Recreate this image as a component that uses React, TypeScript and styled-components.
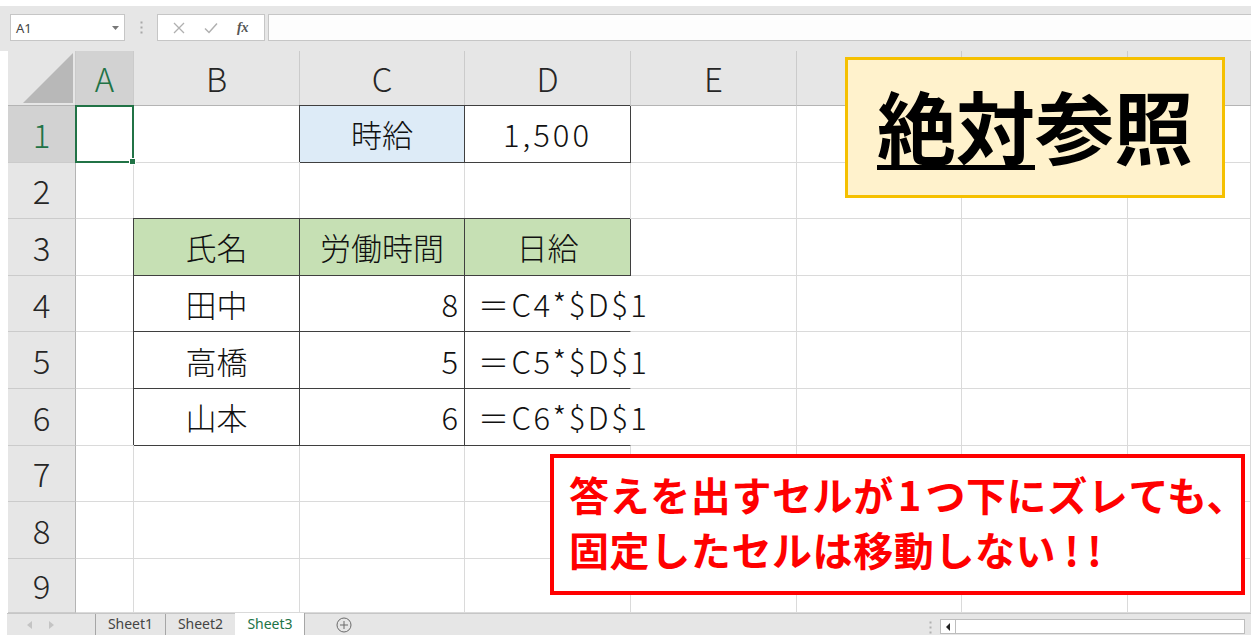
import React from 'react';
import styled, { createGlobalStyle } from 'styled-components';

const jp = `"Noto Sans CJK JP", "Noto Sans", sans-serif`;
const ui = `"Noto Sans", "Noto Sans CJK JP", sans-serif`;

const colors = {
  chrome: '#e6e6e6',
  chromeLine: '#c6c6c6',
  headActive: '#d2d2d2',
  grid: '#dadada',
  dark: '#3f3f3f',
  excelGreen: '#217346',
  blue: '#ddebf7',
  green: '#c6e0b4',
  gold: '#f5c000',
  cream: '#fff2cc',
  red: '#ff0000'
};

const GlobalStyle = createGlobalStyle`
  html, body {
    margin: 0;
    padding: 0;
    background: #ffffff;
    font-family: ${jp};
  }
  * {
    box-sizing: border-box;
  }
`;

const Frame = styled.div`
  width: 1251px;
  height: 643px;
  display: flex;
  flex-direction: column;
  overflow: hidden;
  background: #ffffff;
`;

// 数式バー
const TopBar = styled.div`
  height: 45px;
  margin-top: 6px;
  background: ${colors.chrome};
  display: flex;
  align-items: flex-start;
  padding: 8px 0 0 10px;
`;

const NameBox = styled.div`
  width: 115px;
  height: 27px;
  background: #ffffff;
  border: 1px solid ${colors.chromeLine};
  display: flex;
  align-items: center;
  justify-content: space-between;
  padding: 0 5px 0 5px;
  font-family: ${ui};
  font-size: 13px;
  color: #444444;
`;

const Grip = styled.div<{ $width: number }>`
  width: ${(p) => p.$width}px;
  height: 27px;
  display: flex;
  align-items: center;
  justify-content: center;
`;

const FxBox = styled.div`
  width: 108px;
  height: 27px;
  background: #ffffff;
  border: 1px solid ${colors.chromeLine};
  display: flex;
  align-items: center;
  justify-content: space-around;
  padding: 0 6px;
`;

const FxLabel = styled.span`
  font-family: "Liberation Serif", serif;
  font-style: italic;
  font-weight: 700;
  font-size: 14px;
  color: #555555;
`;

const FormulaInput = styled.div`
  flex: 1;
  height: 27px;
  margin-left: 3px;
  background: #fdfdfd;
  border: 1px solid ${colors.chromeLine};
  border-right: none;
`;

// シート
const SheetArea = styled.div`
  position: relative;
  height: 562px;
  margin-left: 8px;
`;

const Grid = styled.div`
  display: grid;
  grid-template-columns: 68px 58px 166px 165px 166px 166px 165px 166px 1fr;
  grid-template-rows: 55px repeat(8, 56.6px) 1fr;
  height: 100%;
`;

const Head = styled.div<{ $active?: boolean; $row?: boolean }>`
  position: relative;
  background: ${(p) => (p.$active ? colors.headActive : colors.chrome)};
  border-right: 1px solid ${(p) => (p.$row ? '#b4b4b4' : '#cbcbcb')};
  border-bottom: 1px solid ${(p) => (p.$row ? '#cbcbcb' : '#b4b4b4')};
  display: flex;
  align-items: center;
  justify-content: center;
  font-family: ${jp};
  font-weight: 300;
  font-size: 33px;
  color: ${(p) => (p.$active ? colors.excelGreen : '#262626')};
  overflow: hidden;
`;

const CornerMark = styled.svg`
  position: absolute;
  right: 2px;
  bottom: 2px;
`;

type Align = 'left' | 'center' | 'right';

const Cell = styled.div<{
  $bg?: string;
  $align?: Align;
  $box?: boolean;
  $openRight?: boolean;
  $spacing?: number;
  $selected?: boolean;
}>`
  position: relative;
  min-width: 0;
  background: ${(p) => p.$bg || 'transparent'};
  border-right: 1px solid
    ${(p) => (p.$openRight ? 'transparent' : p.$box ? colors.dark : colors.grid)};
  border-bottom: 1px solid ${(p) => (p.$box ? colors.dark : colors.grid)};
  box-shadow: ${(p) => (p.$box ? `-1px -1px 0 0 ${colors.dark}` : 'none')};
  display: flex;
  align-items: center;
  justify-content: ${(p) =>
    p.$align === 'right' ? 'flex-end' : p.$align === 'left' ? 'flex-start' : 'center'};
  padding: ${(p) => (p.$align === 'right' ? '0 6px 0 0' : p.$align === 'left' ? '0 0 0 13px' : '0')};
  white-space: nowrap;
  font-family: ${jp};
  font-weight: 300;
  font-size: 31px;
  letter-spacing: ${(p) => p.$spacing || 0}px;
  color: #111111;

  ${(p) =>
    p.$selected &&
    `
    &::after {
      content: '';
      position: absolute;
      left: -1px;
      top: -1px;
      right: -1px;
      bottom: -1px;
      border: 2px solid ${colors.excelGreen};
    }
    &::before {
      content: '';
      position: absolute;
      right: -3px;
      bottom: -3px;
      width: 5px;
      height: 5px;
      background: ${colors.excelGreen};
      border: 1px solid #ffffff;
      z-index: 1;
    }
  `}
`;

// 吹き出し
const TitleBox = styled.div`
  position: absolute;
  top: 6px;
  left: 837px;
  width: 380px;
  height: 141px;
  background: ${colors.cream};
  border: 3px solid ${colors.gold};
  display: flex;
  align-items: center;
  justify-content: center;
  padding-bottom: 6px;
  font-family: ${jp};
  font-weight: 700;
  font-size: 79px;
  line-height: 1;
  color: #000000;
`;

const Underlined = styled.span`
  text-decoration: underline;
  text-decoration-thickness: 5px;
  text-underline-offset: 6px;
`;

const NoteBox = styled.div`
  position: absolute;
  top: 403px;
  left: 542px;
  width: 695px;
  height: 141px;
  background: #ffffff;
  border: 4px solid ${colors.red};
  display: flex;
  flex-direction: column;
  justify-content: center;
  padding: 0 0 6px 15px;
  font-family: ${jp};
  font-weight: 700;
  font-size: 40px;
  letter-spacing: 0.6px;
  line-height: 55px;
  color: ${colors.red};
  white-space: nowrap;
`;

const Narrow = styled.span<{ $gap: number }>`
  letter-spacing: ${(p) => p.$gap}px;
  margin-left: ${(p) => p.$gap}px;
`;

// シートタブ
const TabBar = styled.div`
  height: 22px;
  margin-left: 7px;
  background: ${colors.chrome};
  border-top: 1px solid ${colors.chromeLine};
  display: flex;
  align-items: stretch;
  font-family: ${ui};
  font-size: 14px;
  color: #444444;
`;

const NavArrows = styled.div`
  width: 88px;
  display: flex;
  align-items: center;
  gap: 17px;
  padding-left: 20px;
`;

const Tab = styled.div<{ $active?: boolean }>`
  width: 70px;
  display: flex;
  align-items: center;
  justify-content: center;
  margin-top: ${(p) => (p.$active ? '-1px' : '0')};
  background: ${(p) => (p.$active ? '#ffffff' : 'transparent')};
  color: ${(p) => (p.$active ? colors.excelGreen : '#444444')};
  border-left: 1px solid ${(p) => (p.$active ? 'transparent' : '#a6a6a6')};
  border-right: ${(p) => (p.$active ? '1px solid #a6a6a6' : 'none')};
  padding-bottom: 2px;
`;

const AddSheet = styled.div`
  width: 78px;
  display: flex;
  align-items: center;
  justify-content: center;
`;

const Spacer = styled.div`
  flex: 1;
`;

const ScrollTrack = styled.div`
  width: 305px;
  height: 15px;
  margin: 5px 6px 0 0;
  background: #ffffff;
  border: 1px solid #bdbdbd;
  display: flex;
`;

const ScrollArrow = styled.div`
  width: 15px;
  border-right: 1px solid #bdbdbd;
  display: flex;
  align-items: center;
  justify-content: center;
`;

const Dots = ({ color = '#a8a8a8' }: { color?: string }) => (
  <svg width="3" height="13" viewBox="0 0 3 13">
    <rect x="0.5" y="0.5" width="2" height="2" fill={color} />
    <rect x="0.5" y="5.5" width="2" height="2" fill={color} />
    <rect x="0.5" y="10.5" width="2" height="2" fill={color} />
  </svg>
);

type CellDef = {
  text?: string;
  bg?: string;
  align?: Align;
  box?: boolean;
  openRight?: boolean;
  spacing?: number;
};

const cells: Record<string, CellDef> = {
  C1: { text: '時給', bg: colors.blue, box: true },
  D1: { text: '1,500', bg: '#ffffff', box: true, spacing: 3 },
  B3: { text: '氏名', bg: colors.green, box: true },
  C3: { text: '労働時間', bg: colors.green, box: true },
  D3: { text: '日給', bg: colors.green, box: true },
  B4: { text: '田中', box: true },
  C4: { text: '8', box: true, align: 'right' },
  D4: { text: '＝C4*$D$1', box: true, align: 'left', openRight: true, spacing: 2.5 },
  B5: { text: '高橋', box: true },
  C5: { text: '5', box: true, align: 'right' },
  D5: { text: '＝C5*$D$1', box: true, align: 'left', openRight: true, spacing: 2.5 },
  B6: { text: '山本', box: true },
  C6: { text: '6', box: true, align: 'right' },
  D6: { text: '＝C6*$D$1', box: true, align: 'left', openRight: true, spacing: 2.5 }
};

const columns = ['A', 'B', 'C', 'D', 'E', 'F', 'G', 'H'];
const rows = [1, 2, 3, 4, 5, 6, 7, 8, 9];

function App() {
  return (
    <Frame>
      <GlobalStyle />
      <TopBar>
        <NameBox>
          <span>A1</span>
          <svg width="7" height="4" viewBox="0 0 7 4">
            <path d="M0 0 L7 0 L3.5 4 Z" fill="#777777" />
          </svg>
        </NameBox>
        <Grip $width={32}>
          <Dots />
        </Grip>
        <FxBox>
          <svg width="12" height="12" viewBox="0 0 12 12">
            <path d="M1 1 L11 11 M11 1 L1 11" stroke="#b0b0b0" strokeWidth="1.3" />
          </svg>
          <svg width="14" height="12" viewBox="0 0 14 12">
            <path d="M1 6.5 L5 10.5 L13 1.5" stroke="#b0b0b0" strokeWidth="1.5" fill="none" />
          </svg>
          <FxLabel>fx</FxLabel>
        </FxBox>
        <FormulaInput />
      </TopBar>

      <SheetArea>
        <Grid>
          <Head>
            <CornerMark width="50" height="50" viewBox="0 0 50 50">
              <path d="M50 0 L50 50 L0 50 Z" fill="#b8b8b8" />
            </CornerMark>
          </Head>
          {columns.map((c) => (
            <Head key={c} $active={c === 'A'}>
              {c}
            </Head>
          ))}
          {rows.map((r) => (
            <React.Fragment key={r}>
              <Head $row $active={r === 1}>
                {r}
              </Head>
              {columns.map((c) => {
                const def = cells[`${c}${r}`] || {};
                return (
                  <Cell
                    key={c}
                    $bg={def.bg}
                    $align={def.align || 'center'}
                    $box={def.box}
                    $openRight={def.openRight}
                    $spacing={def.spacing}
                    $selected={c === 'A' && r === 1}
                  >
                    {def.text}
                  </Cell>
                );
              })}
            </React.Fragment>
          ))}
        </Grid>

        <TitleBox>
          <Underlined>絶対</Underlined>参照
        </TitleBox>

        <NoteBox>
          <div>
            答えを出すセルが<Narrow $gap={4}>1</Narrow>つ下にズレても、
          </div>
          <div>
            固定したセルは移動しない<Narrow $gap={8}>!!</Narrow>
          </div>
        </NoteBox>
      </SheetArea>

      <TabBar>
        <NavArrows>
          <svg width="5" height="8" viewBox="0 0 5 8">
            <path d="M5 0 L0 4 L5 8 Z" fill="#c4c4c4" />
          </svg>
          <svg width="5" height="8" viewBox="0 0 5 8">
            <path d="M0 0 L5 4 L0 8 Z" fill="#c4c4c4" />
          </svg>
        </NavArrows>
        <Tab>Sheet1</Tab>
        <Tab>Sheet2</Tab>
        <Tab $active>Sheet3</Tab>
        <AddSheet>
          <svg width="16" height="16" viewBox="0 0 16 16">
            <circle cx="8" cy="8" r="7" fill="none" stroke="#6a6a6a" strokeWidth="1" />
            <path d="M8 4 V12 M4 8 H12" stroke="#6a6a6a" strokeWidth="1" />
          </svg>
        </AddSheet>
        <Spacer />
        <Grip $width={20}>
          <Dots color="#b0b0b0" />
        </Grip>
        <ScrollTrack>
          <ScrollArrow>
            <svg width="4" height="8" viewBox="0 0 4 8">
              <path d="M4 0 L0 4 L4 8 Z" fill="#222222" />
            </svg>
          </ScrollArrow>
        </ScrollTrack>
      </TabBar>
    </Frame>
  );
}

export default App;
